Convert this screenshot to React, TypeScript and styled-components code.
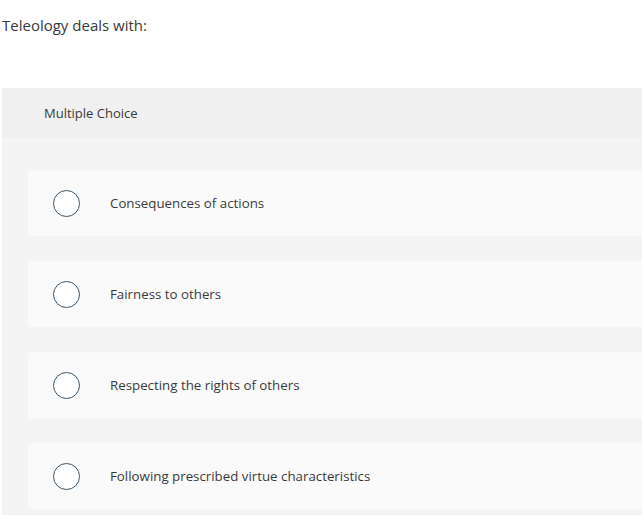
import * as React from 'react';
import styled, { createGlobalStyle } from 'styled-components';

const GlobalStyle = createGlobalStyle`
  html, body {
    margin: 0;
    padding: 0;
    background: #ffffff;
    overflow: hidden;
  }
  body {
    font-family: "Open Sans", "Liberation Sans", sans-serif;
    color: #3a3a3a;
  }
`;

const Page = styled.div`
  width: 642px;
  height: 515px;
  overflow: hidden;
`;

const Question = styled.p`
  margin: 0;
  padding: 15px 0 0 2px;
  height: 88px;
  box-sizing: border-box;
  font-size: 15px;
  line-height: 20px;
  color: #3a3a3a;
`;

const Panel = styled.section`
  margin-left: 2px;
  width: 660px;
  background: #f4f4f4;
`;

const PanelHeader = styled.div`
  height: 50px;
  display: flex;
  align-items: center;
  padding-left: 42px;
  background: #f0f0f0;
  font-size: 13px;
  color: #3a3a3a;
`;

const OptionList = styled.div`
  display: flex;
  flex-direction: column;
  gap: 25px;
  padding: 32px 0 20px 26px;
`;

const Option = styled.label`
  display: flex;
  align-items: center;
  height: 66px;
  background: #fafafa;
  border-radius: 4px 0 0 4px;
  padding-left: 25px;
  cursor: pointer;
`;

const Radio = styled.span`
  width: 25px;
  height: 25px;
  border-radius: 50%;
  border: 1.5px solid #3b5466;
  background: #ffffff;
  flex: none;
`;

const OptionText = styled.span`
  margin-left: 30px;
  font-size: 13.3px;
  color: #3a3a3a;
`;

const options = [
  'Consequences of actions',
  'Fairness to others',
  'Respecting the rights of others',
  'Following prescribed virtue characteristics',
];

export default function App() {
  return (
    <Page>
      <GlobalStyle />
      <Question>Teleology deals with:</Question>
      <Panel>
        <PanelHeader>Multiple Choice</PanelHeader>
        <OptionList>
          {options.map((text) => (
            <Option key={text}>
              <Radio />
              <OptionText>{text}</OptionText>
            </Option>
          ))}
        </OptionList>
      </Panel>
    </Page>
  );
}
